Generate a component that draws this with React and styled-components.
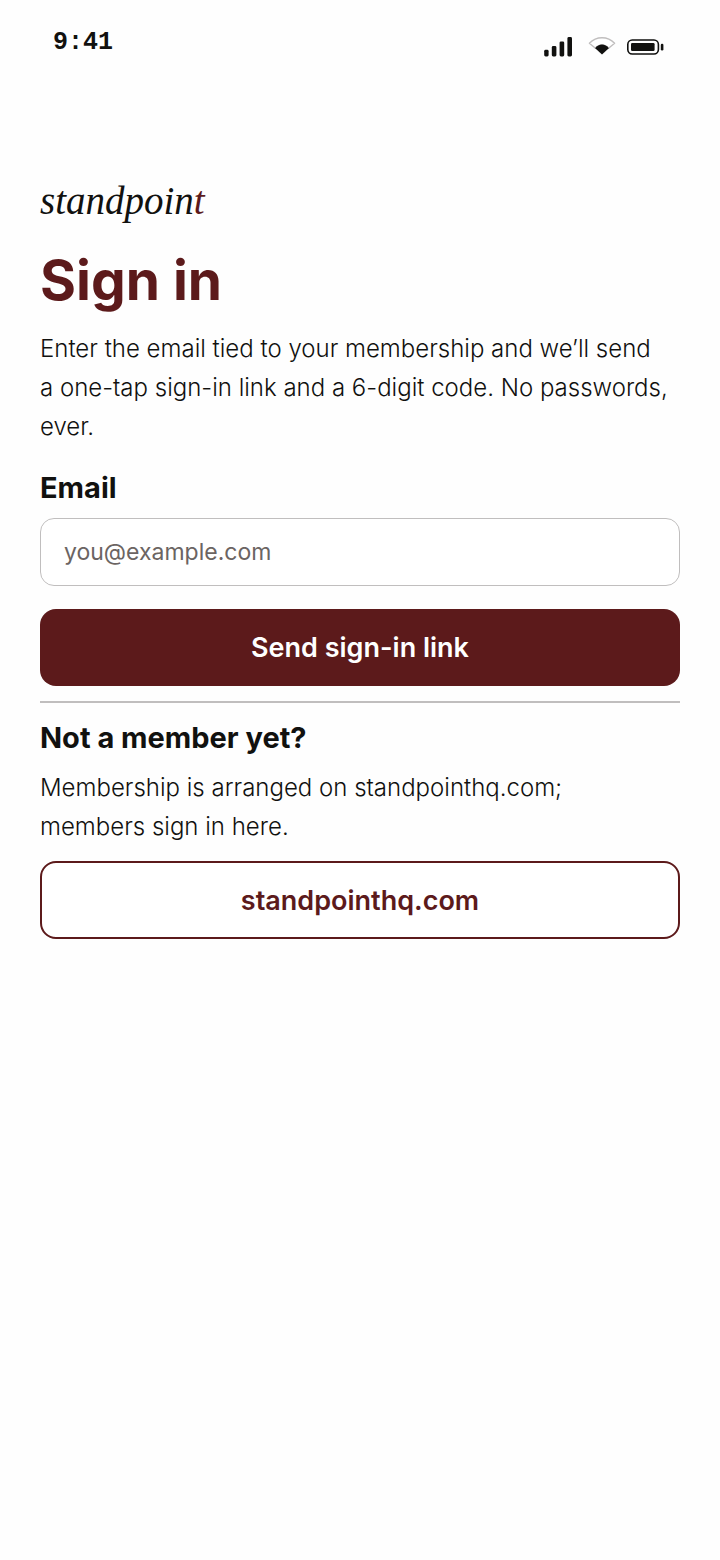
import React from "react";
import styled, { createGlobalStyle } from "styled-components";

const App = () => {
    return (
        <>
            <GlobalStyle />
            <Screen>
                <StatusBar>
                    <Time>9:41</Time>
                    <StatusIcons>
                        <SignalIcon />
                        <WifiIcon />
                        <BatteryIcon />
                    </StatusIcons>
                </StatusBar>
                <Content>
                    <Logo>standpoin<span>t</span></Logo>
                    <Title>Sign in</Title>
                    <Text>
                        Enter the email tied to your membership and we’ll send<br />
                        a one-tap sign-in link and a 6-digit code. No passwords, ever.
                    </Text>
                    <Form onSubmit={(e) => e.preventDefault()}>
                        <Label htmlFor="email">Email</Label>
                        <Input id="email" type="email" placeholder="you@example.com" />
                        <Button type="submit">Send sign-in link</Button>
                    </Form>
                    <Divider />
                    <Subtitle>Not a member yet?</Subtitle>
                    <Text>
                        Membership is arranged on standpointhq.com;<br />
                        members sign in here.
                    </Text>
                    <LinkButton href="#">standpointhq.com</LinkButton>
                </Content>
            </Screen>
        </>
    )
}

const SignalIcon = () => (
    <svg width="30" height="20" viewBox="0 0 30 20" fill="#11110f" aria-hidden="true">
        <rect x="0.2" y="12.8" width="4.4" height="6.6" rx="1.4" />
        <rect x="7.8" y="9" width="4.6" height="10.4" rx="1.4" />
        <rect x="15.6" y="4.4" width="4.6" height="15" rx="1.4" />
        <rect x="23.4" y="0" width="4.6" height="19.4" rx="1.4" />
    </svg>
)

const WifiIcon = () => (
    <svg width="28" height="20" viewBox="0 0 28 20" aria-hidden="true">
        <path d="M1.4 6.2C8.4 -1 19.6 -1 26.6 6.2L20.6 11.2C17 6.8 11 6.8 7.4 11.2Z" fill="#fff" stroke="#c0bebe" strokeWidth="1.4" strokeLinejoin="round" />
        <path d="M14 17.4L7.2 11.2C10.8 6.4 17.2 6.4 20.8 11.2Z" fill="#11110f" />
    </svg>
)

const BatteryIcon = () => (
    <svg width="38" height="18" viewBox="0 0 38 18" aria-hidden="true">
        <rect x="1.8" y="2" width="30.6" height="14" rx="4.4" fill="none" stroke="#11110f" strokeWidth="1.6" />
        <rect x="5" y="5" width="23.6" height="8" rx="1.2" fill="#11110f" />
        <rect x="34.8" y="5.8" width="2.6" height="6.6" rx="1.2" fill="#11110f" />
    </svg>
)

const GlobalStyle = createGlobalStyle`
    * {
        box-sizing: border-box;
    }
    body {
        margin: 0;
        background: #fefefe;
        color: #11110f;
        font-family: Inter, "Liberation Sans", sans-serif;
    }
`;

const Screen = styled.div`
    width: 100%;
    min-height: 100vh;
`;

const StatusBar = styled.header`
    display: flex;
    justify-content: space-between;
    padding: 27px 56px 0 53px;
`;

const Time = styled.span`
    font-family: "Liberation Mono", monospace;
    font-size: 25px;
    font-weight: 700;
    line-height: 32px;
`;

const StatusIcons = styled.div`
    display: flex;
    align-items: center;
    gap: 14px;
    padding-top: 8px;

    svg:last-child {
        margin-left: -4px;
    }
`;

const Content = styled.main`
    display: flex;
    flex-direction: column;
    padding: 113px 40px 40px;
`;

const Logo = styled.div`
    font-family: "Liberation Serif", serif;
    font-size: 39px;
    font-style: italic;
    line-height: 58px;

    span {
        color: #5c1a1b;
    }
`;

const Title = styled.h1`
    margin: 14px 0 13px;
    font-size: 55px;
    font-weight: 700;
    line-height: 72px;
    color: #5c1a1b;
`;

const Text = styled.p`
    margin: 0;
    font-size: 24px;
    font-weight: 300;
    line-height: 39px;
`;

const Form = styled.form`
    display: flex;
    flex-direction: column;
`;

const Label = styled.label`
    margin: 22px 0 10px;
    font-size: 29px;
    font-weight: 700;
    line-height: 40px;
`;

const Input = styled.input`
    width: 100%;
    height: 68px;
    padding: 0 23px;
    border: 1px solid #c0bebe;
    border-radius: 14px;
    background: #fff;
    font-family: inherit;
    font-size: 23px;
    color: #11110f;

    &::placeholder {
        color: #6b6462;
        opacity: 1;
    }
`;

const Button = styled.button`
    height: 77px;
    margin-top: 23px;
    border: none;
    border-radius: 16px;
    background: #5c1a1b;
    font-family: inherit;
    font-size: 27px;
    font-weight: 600;
    color: #fff;
    cursor: pointer;
`;

const Divider = styled.hr`
    width: 100%;
    height: 2px;
    margin: 15px 0;
    border: none;
    background: #c0bebe;
`;

const Subtitle = styled.h2`
    margin: 0 0 10px;
    font-size: 29px;
    font-weight: 700;
    line-height: 40px;
`;

const LinkButton = styled.a`
    display: flex;
    align-items: center;
    justify-content: center;
    height: 78px;
    margin-top: 15px;
    border: 2px solid #5c1a1b;
    border-radius: 16px;
    background: #fff;
    font-size: 27px;
    font-weight: 600;
    color: #5c1a1b;
    text-decoration: none;
`;

export default App;
